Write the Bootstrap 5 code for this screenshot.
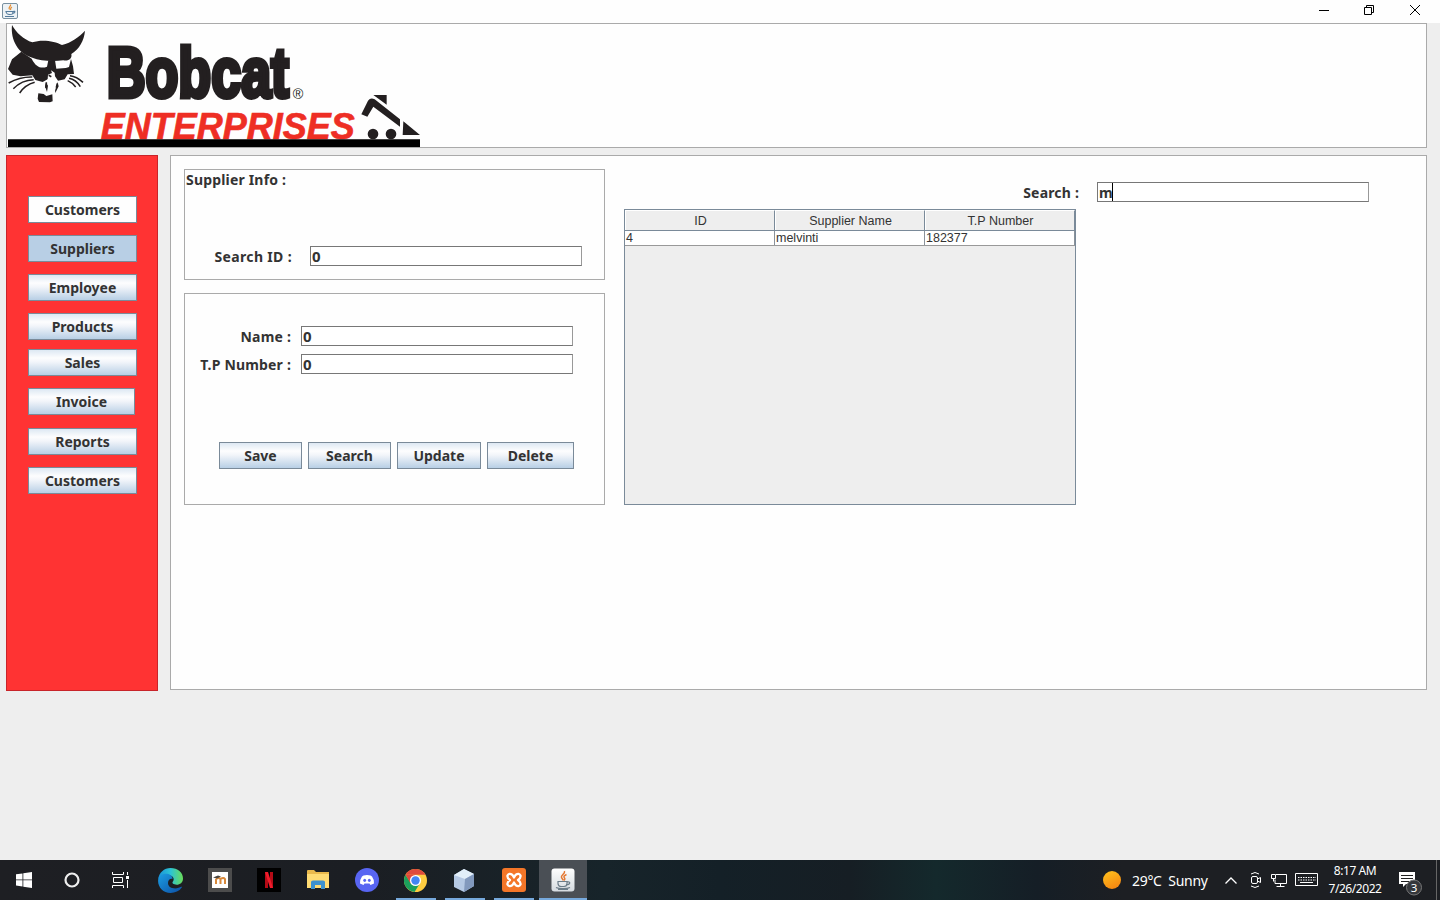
<!DOCTYPE html>
<html lang="en">
<head>
<meta charset="utf-8">
<meta name="viewport" content="width=device-width, initial-scale=1">
<title>Bobcat Enterprises - Suppliers</title>
<link href="https://cdn.jsdelivr.net/npm/bootstrap@5.3.0/dist/css/bootstrap.min.css" rel="stylesheet">
<style>
body{background:#eee;font-family:"Noto Sans","Open Sans",sans-serif;font-size:14px;color:#333;width:1440px;height:900px;overflow:hidden}
svg{display:block;flex:none}
.titlebar{height:23px;background:#fefefe}
.wincontrols{width:138px;height:23px}
.panel{background:#fefefe;border:1px solid #aaa}
.brand-panel{height:125px;width:1421px;margin-left:6px;padding-left:1px}
.workspace{padding:7px 0 0 6px;gap:12px}
.side{width:152px;height:536px;background:#f33;border:1px solid #c8242a;padding:40px 0 0 21px}
.swing{font-family:"Noto Sans",sans-serif;font-weight:700;font-size:14px;line-height:25px;height:27px;padding:0;color:#333;border:1px solid #7a8a99;border-radius:0;background:linear-gradient(#dde8f3 0,#fdfdfe 32%,#f2f5fa 48%,#b8cfe5 100%);text-align:center}
.side .swing{width:109px;margin-bottom:12px}
.side .swing.tight{margin-bottom:9px}
.side .swing.loose{margin-bottom:13px}
.side .swing.narrow{width:107px}
.swing.hovered{background:#fefefe}
.swing.pressed{background:#b8cfe5}
.content-area{width:1257px;height:535px;padding:13px 0 0 13px;gap:19px}
.forms{width:421px}
.lookup{height:111px;margin-bottom:13px}
.details{height:212px;padding-top:32px}
.lbl{font-weight:700;font-size:14px;line-height:20px;text-align:right;white-space:nowrap;letter-spacing:.18px}
.field-lbl{height:20px;line-height:22px}
.field{width:272px;height:20px;border:1px solid #7a8a99;border-color:#777 #999 #777 #777;border-radius:0;background:#fff;padding:0 1px;font-weight:700;font-size:14px;line-height:19px;color:#333}
.digits{font-size:15px}
.results{width:745px;padding-top:13px}
.grid-view{width:452px;height:296px;margin-top:7px;border:1px solid #7a8a99;background:#eee;font-family:"Liberation Sans",Arial,sans-serif;font-size:12.5px;color:#333}
.grid-head{height:21px;border-bottom:1px solid #7a8a99;line-height:21px;text-align:center}
.grid-head>div{width:150px;border-right:1px solid #7a8a99;border-left:1px solid #fff;border-top:1px solid #fff;height:20px;padding-left:1px}
.grid-row{height:15px;line-height:14px;background:#fff;border-bottom:1px solid #999;width:450px}
.grid-row>div{width:150px;border-right:1px solid #8a929a;padding-left:1px}
.caret{display:inline-block;width:1px;height:18px;background:#000;vertical-align:top;margin-left:-1px}
.taskbar{height:40px;background:linear-gradient(90deg,#1e1f23 0,#1b1e23 25%,#17242a 42%,#142027 50%,#161e24 59%,#14292c 65%,#151e26 72%,#1d1f23 78%);color:#fff}
.tb{width:49px;height:40px;display:flex;align-items:center;justify-content:center}
.tb.first{width:48px}
.running{background:linear-gradient(#76a9dc,#76a9dc) bottom/40px 2px no-repeat}
.focused{width:48px;margin-left:1px;background:linear-gradient(#76a9dc,#76a9dc) bottom/48px 2px no-repeat,#4a4f55}
.clock{width:60px;font-size:12px;line-height:18px;letter-spacing:-.45px}
</style>
</head>
<body class="d-flex flex-column">
<svg width="0" height="0" class="position-absolute"><defs>
<linearGradient id="jbg" x2="0" y2="1"><stop stop-color="#fff"/><stop offset="1" stop-color="#d5dbe0"/></linearGradient>
<symbol id="java" viewBox="0 0 24 24"><rect x=".5" y=".5" width="23" height="23" rx="3" fill="url(#jbg)"/><path d="M13.500 3c1 3-4 4-3 6.500.3 1 1.500 1.500 1.500 3M15.500 6.500c-2 1-3.500 2-2 3.500.7.8.3 1.700-.7 2.300" fill="none" stroke="#e57832" stroke-width="1.500"/><path d="M7 13.500h9v2c0 2-1.500 3-3 3h-3c-1.500 0-3-1-3-3zM16 14c4-1 3.500 2.500-.5 3M5 19.500c3 1.600 11 1.600 14 0M7 21.300h10" fill="none" stroke="#6b7c88" stroke-width="1.200"/></symbol>
</defs></svg>

<header class="titlebar d-flex justify-content-between">
  <svg width="24" height="23"><rect x="2.500" y="3.500" width="15" height="15" rx="1.500" fill="#edf2f5" stroke="#7890a0"/><path d="M10.500 4.500c1 2-3 2.500-1 5M12 7c-2 1-1 1.500-1.500 3" fill="none" stroke="#e58a2c" stroke-width="1.200"/><path d="M6 11.500h7c0 3-1 3-3.500 3S6.500 14 6 11.500zM13 11.500c3-1 2 2-.5 2M5 16.500h9" fill="none" stroke="#557c9d" stroke-width="1.200"/></svg>
  <svg class="wincontrols" viewBox="1302 0 138 23" fill="none" stroke="#000"><path d="M1319 10.500h10M1364.500 7.500h7v7h-7zM1366.500 7.500v-2h7v7h-2"/><path d="M1410 5l10 10M1420 5l-10 10"/></svg>
</header>

<section class="panel brand-panel">
  <svg width="412" height="123" viewBox="24 72 1236 369" role="img" aria-label="Bobcat Enterprises">
    <g fill="#231f20">
      <path d="M36 75C48 98 72 119 97 127C125 117 165 123 186 135C215 128 238 110 255 92C252 122 238 147 214 162C217 176 206 184 190 181C155 185 120 182 97 173C55 162 31 120 36 75Z"/>
      <path d="M64 155L36 178L24 207L38 224L62 229L97 226L106 240L128 246L143 238L144 224L156 219L153 211L164 218L165 229L174 242L194 238L203 223L222 222L219 199L213 177L207 201C195 206 180 205 169 206L165 181L145 181L141 200C124 207 108 202 95 176Z"/>
      <path d="M115 280L131 282L139 288L157 283L158 304L150 307L117 306L113 296Z"/>
      <path d="M139 245L135 259L141 276L144 257ZM172 244L176 259L166 279L164 260Z"/>
    </g>
    <path d="M145 235L154 222L163 235L174 244L162 281L143 281L145 259L139 245Z" fill="#fff"/>
    <path d="M146 226L154 230M139 247L138 264M172 250L169 263" stroke="#231f20" stroke-width="5"/>
    <path d="M97 231Q60 230 26 249M101 239Q65 240 40 266M104 247Q75 255 59 279M210 227Q230 229 249 247M207 235Q228 239 241 260M203 242Q217 248 227 261" fill="none" stroke="#231f20" stroke-width="4.500"/>
    <text x="320" y="292" textLength="547" lengthAdjust="spacingAndGlyphs" font-family="Liberation Sans Narrow,Liberation Sans,sans-serif" font-weight="700" font-size="212" fill="#231f20" stroke="#231f20" stroke-width="15">Bobcat</text>
    <text x="878" y="297" font-family="Liberation Sans,sans-serif" font-size="43" fill="#231f20">®</text>
    <text x="302" y="417" textLength="762" lengthAdjust="spacingAndGlyphs" font-family="Liberation Sans,sans-serif" font-weight="700" font-style="italic" font-size="112" fill="#ee2e24" stroke="#ee2e24" stroke-width="2">ENTERPRISES</text>
    <g fill="#231f20"><path d="M1084 343L1104 302Q1112 291 1124 298L1200 358V380L1120 320L1102 350ZM1120 285H1160V314ZM1210 364L1260 405H1208Z"/><circle cx="1119" cy="402" r="16"/><circle cx="1173" cy="402" r="16"/></g>
    <path d="M24 418H1260V441H24Z"/>
  </svg>
</section>

<main class="workspace d-flex flex-grow-1 align-items-start">
  <nav class="side d-flex flex-column align-items-start">
    <button class="swing hovered">Customers</button>
    <button class="swing pressed">Suppliers</button>
    <button class="swing">Employee</button>
    <button class="swing tight">Products</button>
    <button class="swing">Sales</button>
    <button class="swing narrow loose">Invoice</button>
    <button class="swing">Reports</button>
    <button class="swing">Customers</button>
  </nav>
  <section class="panel content-area d-flex align-items-start">
    <div class="forms">
      <div class="panel lookup">
        <div class="lbl text-start" style="padding-left:1px">Supplier Info :</div>
        <div class="d-flex" style="margin-top:56px"><label class="lbl field-lbl" style="width:107px;margin-right:18px;letter-spacing:.35px">Search ID :</label><div class="field digits">0</div></div>
      </div>
      <div class="panel details">
        <div class="d-flex" style="margin-bottom:8px"><label class="lbl field-lbl" style="width:106px;margin-right:10px">Name :</label><div class="field digits">0</div></div>
        <div class="d-flex"><label class="lbl field-lbl" style="width:106px;margin-right:10px">T.P Number :</label><div class="field digits">0</div></div>
        <div class="d-flex" style="margin:68px 0 0 34px;gap:6px">
          <button class="swing" style="width:83px">Save</button>
          <button class="swing" style="width:83px">Search</button>
          <button class="swing" style="width:84px">Update</button>
          <button class="swing" style="width:87px">Delete</button>
        </div>
      </div>
    </div>
    <div class="results">
      <div class="d-flex justify-content-end"><label class="lbl field-lbl" style="margin-right:18px">Search :</label><div class="field">m<span class="caret"></span></div></div>
      <div class="grid-view">
        <div class="grid-head d-flex"><div>ID</div><div>Supplier Name</div><div>T.P Number</div></div>
        <div class="grid-row d-flex"><div>4</div><div>melvinti</div><div>182377</div></div>
      </div>
    </div>
  </section>
</main>

<footer class="taskbar d-flex align-items-center">
  <div class="tb first"><svg width="16" height="16" fill="#fff"><path d="M0 2.300L6.500 1.400V7.500H0zM7.300 1.300L16 0V7.500H7.300zM0 8.300H6.500V14.500L0 13.600zM7.300 8.300H16V16L7.300 14.700z"/></svg></div>
  <div class="tb first"><svg width="16" height="16"><circle cx="8" cy="8" r="6.500" fill="none" stroke="#eee" stroke-width="2.200"/></svg></div>
  <div class="tb first"><svg width="17" height="16" fill="none" stroke="#fff"><path d="M.5 0v2.500h11V0M1.500 5.500h9v5h-9zM.5 16v-2.500h11V16M15.500 0v3M15.500 8v8"/><path d="M14 4h3v3h-3z" fill="#fff" stroke="none"/></svg></div>
  <div class="tb" style="margin-left:2px"><svg width="25" height="25" viewBox="0 0 24 24"><defs><linearGradient id="eg"><stop stop-color="#1a91d8"/><stop offset=".5" stop-color="#2cc3d5"/><stop offset="1" stop-color="#6add59"/></linearGradient><linearGradient id="eb" x2="1" y2="1"><stop stop-color="#1b9de2"/><stop offset="1" stop-color="#0d4fa5"/></linearGradient></defs><path d="M.2 11C.8 4.500 6 0 12 0c7 0 12 4.500 12 10 0 4-3 6-6 6-3.500 0-4.500-1.400-4-2.500 2.400-2.500.6-6.500-3.500-6.500C5 7 .6 9 .2 11z" fill="url(#eg)"/><path d="M.1 12C.3 8 3.500 5.600 7.500 5.600c3.500 0 6.500 2 6.500 4.900-5-1.500-7 8 1 9 3 .4 6-.8 7.200-1.500.6-.3 1 .2.6.8C20.500 22.300 16.500 24 12 24 5 24-.2 18.500.1 12z" fill="url(#eb)"/></svg></div>
  <div class="tb"><svg width="24" height="24"><path fill="#4c4c4c" d="M0 0h24v24H0z"/><path fill="#fff" d="M4 4h16v16H4z"/><path d="M8 16v-5M8 11q3.500-2 4.500 0v5M12.500 11q3-2 4.500 0v5" fill="none" stroke="#d98a3c" stroke-width="2"/><path d="M5 9.500l5-2 3 1-4 2z" fill="#4b4640"/></svg></div>
  <div class="tb"><svg width="24" height="24"><path d="M0 0h24v24H0z"/><path fill="#b40b16" d="M8 4h3v16H8zM13 4h3v16h-3z"/><path fill="#ed1c2b" d="M8 4h3l5 16h-3z"/></svg></div>
  <div class="tb"><svg width="22" height="20"><path d="M0 1q0-1 1-1h6l2 2h13v16H0z" fill="#eab94c"/><path d="M0 4h22v14H0z" fill="#ffdb73"/><path d="M4 19v-7q0-1.500 2-1.500h10q2 0 2 1.500v7h-4v-4H8v4z" fill="#3c91cf"/></svg></div>
  <div class="tb"><svg width="24" height="24"><circle cx="12" cy="12" r="12" fill="#5865f2"/><path d="M8.500 7.500Q12 6.500 15.500 7.500L17 8.500Q19.500 12 19 15.500L15.500 17l-1-1.500h-5l-1 1.500L5 15.500Q4.500 12 7 8.500z" fill="#fff"/><ellipse cx="9.700" cy="12.300" rx="1.400" ry="1.600" fill="#5865f2"/><ellipse cx="14.300" cy="12.300" rx="1.400" ry="1.600" fill="#5865f2"/></svg></div>
  <div class="tb running"><svg width="23" height="23" viewBox="0 0 24 24"><circle cx="12" cy="12" r="12" fill="#ffcd40"/><path d="M1.600 6A12 12 0 0 1 22.400 6H12z" fill="#df4a3c"/><path d="M1.600 6A12 12 0 0 0 11 24L16.500 15 7.500 15z" fill="#1ba05c"/><path d="M1.600 6L6.800 15 12 6z" fill="#df4a3c"/><circle cx="12" cy="12" r="5.800" fill="#fff"/><circle cx="12" cy="12" r="4.400" fill="#4285f4"/></svg></div>
  <div class="tb running"><svg width="21" height="23"><path d="M10 0l10 5v12l-10 6L0 18V6z" fill="#b5c9e4"/><path d="M10 0l10 5-9 5L0 6z" fill="#e2eff9"/><path d="M11 10l9-5v12l-10 6z" fill="#8299bd"/></svg></div>
  <div class="tb running"><svg width="24" height="24"><rect width="24" height="24" rx="3" fill="#f47628"/><path d="M12 9.500L10.500 7Q7 4.500 5.500 7.500Q5 10 8 12Q5 14 5.500 16.500Q7 19.500 10.500 17L12 14.500L13.500 17Q17 19.500 18.500 16.500Q19 14 16 12Q19 10 18.500 7.500Q17 4.500 13.500 7Z" fill="none" stroke="#fff" stroke-width="2.300" stroke-linejoin="round"/></svg></div>
  <div class="tb focused"><svg width="24" height="24"><use href="#java"/></svg></div>
  <div class="d-flex align-items-center" style="margin-left:515px">
    <svg width="20" height="20"><defs><linearGradient id="sun" x2=".5" y2="1"><stop stop-color="#ffc31d"/><stop offset="1" stop-color="#f58a12"/></linearGradient></defs><circle cx="10" cy="10" r="9" fill="url(#sun)"/></svg>
    <div class="text-nowrap" style="width:93px;padding-left:10px;font-size:14px;letter-spacing:-.3px">29°C&nbsp; Sunny</div>
    <svg width="110" height="40" viewBox="1215 860 110 40" fill="none" stroke="#fff"><path d="M1225.500 883.500l5.500-5.500 5.500 5.500" stroke-width="1.300"/><rect x="1251.500" y="876.500" width="6" height="7" rx="1.500"/><path d="M1257.500 879l3-1.500v5l-3-1.500M1251 874q4-3 8 0M1251 886q4 3 8 0"/><path d="M1276 874.500h10.500v9H1275v-4M1280.500 883.500v3M1276.500 886.500h8M1271.500 874.500h4v4h-4zM1273.500 878.500v3"/><path d="M1295.500 873.500h22v12h-22z"/><path d="M1298 877.500h18M1298 880h18" stroke-dasharray="1.500 1"/><path d="M1300 882.500h13"/></svg>
    <div class="clock text-center"><div>8:17 AM</div><div>7/26/2022</div></div>
    <svg width="55" height="40" viewBox="1385 860 55 40"><path d="M1399 872h16v12h-9l-3 3v-3h-4z" fill="#fff"/><path d="M1401 875.500h12M1401 878.500h12M1401 881.500h8" stroke="#222"/><circle cx="1414" cy="887.500" r="7.500" fill="#35373b" stroke="#777"/><text x="1414" y="891.500" fill="#fff" font-family="Noto Sans,sans-serif" font-size="11.500" text-anchor="middle">3</text><path d="M1436.500 860v40" stroke="#666"/></svg>
  </div>
</footer>
<script src="https://cdn.jsdelivr.net/npm/bootstrap@5.3.0/dist/js/bootstrap.bundle.min.js"></script>
</body>
</html>
